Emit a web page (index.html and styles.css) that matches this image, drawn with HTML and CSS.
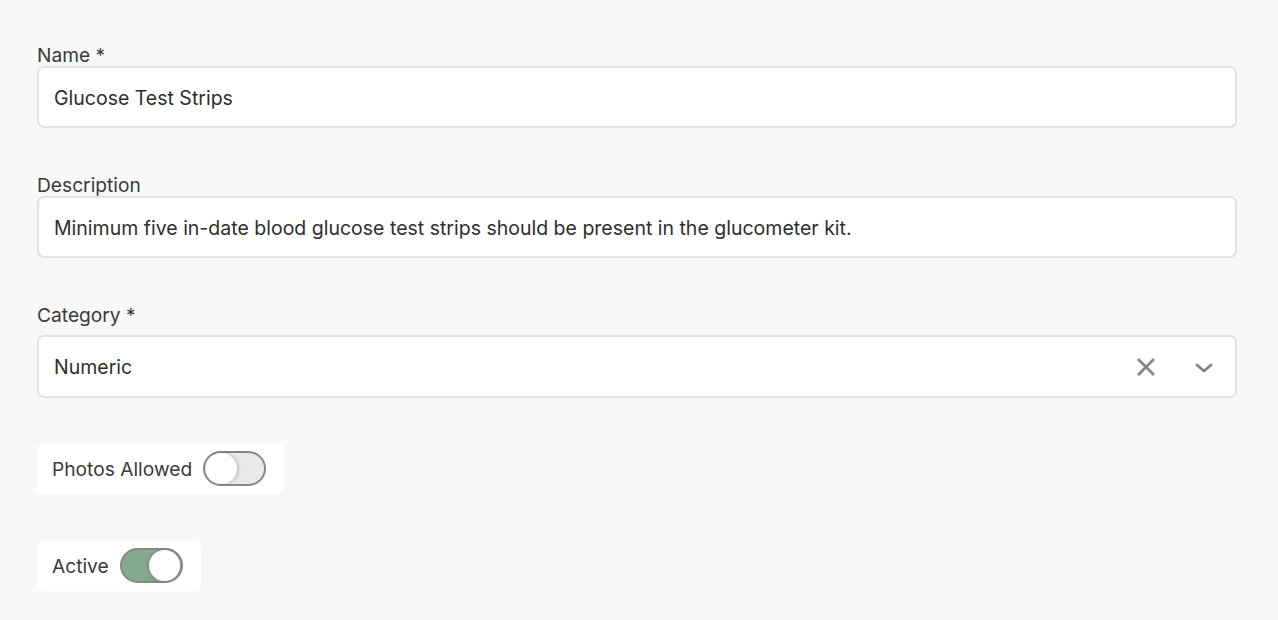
FILE: index.html
```html
<!DOCTYPE html>
<html>
<head>
<meta charset="utf-8">
<link rel="stylesheet" href="styles.css">
</head>
<body>
<form class="form">
  <div class="field">
    <label class="label">Name *</label>
    <div class="input">Glucose Test Strips</div>
  </div>
  <div class="field">
    <label class="label">Description</label>
    <div class="input">Minimum five in-date blood glucose test strips should be present in the glucometer kit.</div>
  </div>
  <div class="field">
    <label class="label">Category *</label>
    <div class="input select">
      <span class="select-value">Numeric</span>
      <span class="select-icons">
        <svg class="icon-clear" width="20" height="20" viewBox="0 0 20 20"><path d="M2 2 L18 18 M18 2 L2 18" stroke="#858585" stroke-width="2.8" stroke-linecap="butt" fill="none"/></svg>
        <svg class="icon-chevron" width="18" height="10" viewBox="0 0 18 10"><path d="M2 2 L9 8 L16 2" stroke="#858585" stroke-width="2.8" stroke-linecap="round" stroke-linejoin="round" fill="none"/></svg>
      </span>
    </div>
  </div>
  <div class="toggle-row">
    <div class="toggle-card">
      <span class="toggle-label">Photos Allowed</span>
      <span class="switch"><span class="knob"></span></span>
    </div>
  </div>
  <div class="toggle-row">
    <div class="toggle-card">
      <span class="toggle-label">Active</span>
      <span class="switch on"><span class="knob"></span></span>
    </div>
  </div>
</form>
</body>
</html>
```
FILE: styles.css
```css
html, body {
  margin: 0;
  padding: 0;
  background: #f8f8f8;
}
body {
  font-family: Inter, "Noto Sans", sans-serif;
  color: #333333;
}
.form {
  width: 1200px;
  margin-left: 37px;
  padding-top: 44px;
  display: flex;
  flex-direction: column;
}
.field {
  display: flex;
  flex-direction: column;
  margin-bottom: 46px;
}
.label {
  font-size: 19.2px;
  line-height: 22px;
  padding-top: 0;
  color: #3a3a3a;
}
.input {
  box-sizing: border-box;
  height: 62px;
  background: #ffffff;
  border: 2px solid #e3e3e3;
  border-radius: 7px;
  padding: 1px 15px 0;
  font-size: 19.5px;
  line-height: 58px;
  color: #2e2e2e;
  white-space: nowrap;
  overflow: hidden;
}
.select {
  margin-top: 9px;
  height: 63px;
  display: flex;
  align-items: center;
  justify-content: space-between;
  padding-right: 22px;
}
.field:nth-child(3) {
  margin-bottom: 45px;
}
.select-icons {
  display: flex;
  align-items: center;
  gap: 39px;
}
.icon-clear { display: block; }
.icon-chevron { display: block; margin-top: 1px; }
.toggle-row {
  display: flex;
  margin-bottom: 46px;
}
.toggle-card {
  box-sizing: border-box;
  height: 51px;
  background: #ffffff;
  border-radius: 7px;
  padding: 0 18px 0 15px;
  display: flex;
  align-items: center;
  gap: 11px;
}
.toggle-label {
  font-size: 19.2px;
  color: #3a3a3a;
}
.switch {
  box-sizing: border-box;
  position: relative;
  width: 63px;
  height: 35px;
  border: 2px solid #868686;
  border-radius: 18px;
  background: #e8e8e8;
  display: flex;
  align-items: center;
  padding: 0 1px;
}
.switch .knob {
  width: 31px;
  height: 31px;
  border-radius: 50%;
  background: #ffffff;
  box-shadow: 2px 0 3px rgba(0, 0, 0, 0.15);
}
.switch.on {
  background: #86a98e;
  justify-content: flex-end;
}
.switch.on .knob {
  box-shadow: -2px 0 3px rgba(0, 0, 0, 0.15);
}
```
